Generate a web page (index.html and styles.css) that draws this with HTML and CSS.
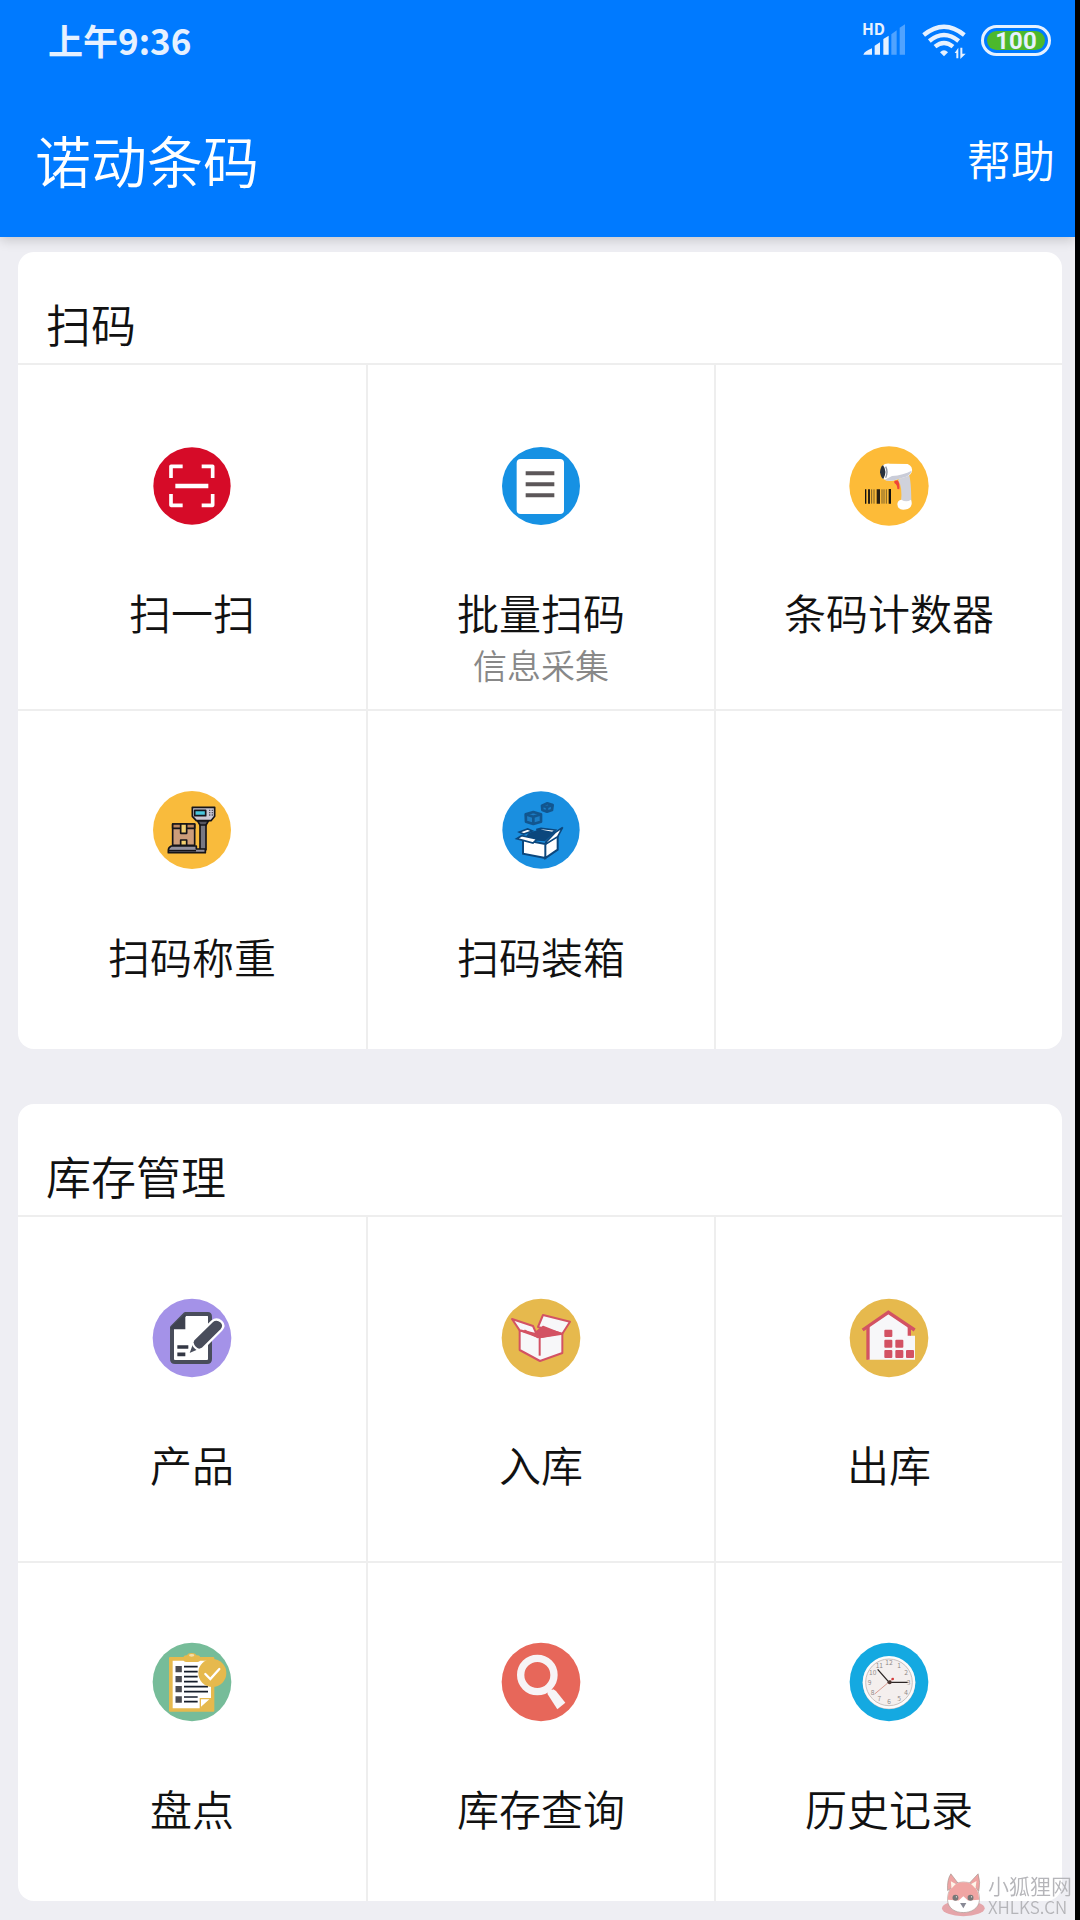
FILE: index.html
```html
<!DOCTYPE html>
<html lang="zh-CN">
  <head>
    <meta charset="UTF-8" />
    <meta name="viewport" content="width=device-width, initial-scale=1.0" />
    <link rel="stylesheet" href="styles.css" />
    <title>诺动条码</title>
  </head>
  <body>
    <header>
      <div class="status">
        <span class="time">上午9:36</span>
        <svg class="signal" viewBox="0 0 132 102" aria-hidden="true">
          <text x="0" y="36" font-size="47">HD</text>
          <path d="M4 95 Q8 84 30 76 V95 Z M38 68 L54 58 V95 H38 Z M64 48 L80 38 V95 H64 Z" />
          <path opacity="0.35" d="M88 34 L104 22 V95 H88 Z M113 14 L129 4 V95 H113 Z" />
        </svg>
        <svg class="wifi" viewBox="0 0 132 102" aria-hidden="true">
          <g fill="none" stroke="#e6f1ff" stroke-width="13">
            <path d="M5 36 Q66 -14 127 36" />
            <path d="M22 54 Q66 18 110 54" />
            <path d="M39 71 Q66 49 93 71" />
          </g>
          <path d="M54 88 Q66 76 78 88 L66 100 Z" />
          <path d="M98 90 L109 74 V106 H103 V90 Z M115 74 H121 V92 H131 L115 108 Z" />
        </svg>
        <span class="battery"><span>100</span></span>
      </div>
      <div class="bar">
        <h1>诺动条码</h1>
        <a href="#help">帮助</a>
      </div>
    </header>

    <main>
      <section>
        <h2>扫码</h2>
        <nav class="grid">
          <a href="#scan">
            <svg viewBox="35 31 240 240" aria-hidden="true">
              <circle cx="155" cy="151" r="116" fill="#d60b28" />
              <path d="M92 127 V92 H127 M184 92 H217 V127 M92 175 V209 H127 M184 209 H217 V175" fill="none" stroke="#fff" stroke-width="11" stroke-linejoin="round" />
              <path d="M105 151 H204" stroke="#fff" stroke-width="13" />
            </svg>
            <span>扫一扫</span>
          </a>
          <a href="#batch">
            <svg viewBox="32 30 240 240" aria-hidden="true">
              <circle cx="152" cy="150" r="117" fill="#1691e3" />
              <rect x="79" y="69" width="142" height="165" rx="12" fill="#fff" />
              <path d="M106 112 H192 M106 145 H192 M106 178 H192" stroke="#5c5759" stroke-width="12" />
            </svg>
            <span>批量扫码</span>
            <small>信息采集</small>
          </a>
          <a href="#counter">
            <svg viewBox="27 29 240 240" aria-hidden="true">
              <circle cx="147" cy="149" r="119" fill="#fdbb38" />
              <path d="M77 159 V202 M151 158 V202 M148 158 V202" stroke="#111" stroke-width="4" />
              <path d="M87 159 V202 M113 159 V202 M117 159 V202" stroke="#2a2112" stroke-width="6" />
              <path d="M95 159 V202 M102 159 V202 M126 159 V202 M132 159 V202 M139 159 V202" stroke="#7b6127" stroke-width="3" />
              <path d="M174 130 L206 112 Q214 130 214 205 L183 196 Q188 152 174 130 Z" fill="#d0d2db" />
              <path d="M172 204 Q172 192 184 190 Q199 199 213 190 Q220 211 203 218 Q174 226 172 204 Z" fill="#fff" />
              <path d="M163 134 L173 132 Q180 142 178 159 L172 158 Q172 145 163 140 Z" fill="#ef4438" />
              <path d="M127 88 Q136 80 150 82 L203 83 Q220 90 215 108 Q209 121 188 124 L158 133 Q139 136 127 126 Z" fill="#fff" />
              <path d="M156 119 Q190 116 215 103 Q211 120 188 124 L158 133 Q143 135 134 130 Z" fill="#c9ccd8" />
              <path d="M129 86 Q143 106 130 128 Q123 125 120 108 Q121 92 129 86 Z" fill="#28303c" />
              <path d="M137 91 Q145 106 137 124" fill="none" stroke="#8b91a0" stroke-width="4" />
            </svg>
            <span>条码计数器</span>
          </a>
          <a href="#weigh">
            <svg viewBox="36 31 240 240" aria-hidden="true">
              <circle cx="156" cy="151" r="117" fill="#f9bb3c" />
              <g stroke="#151419" stroke-width="5" stroke-linejoin="round">
                <rect x="180" y="132" width="18" height="78" fill="#777782" />
                <path d="M172 123 H206 L198 136 H180 Z" fill="#555560" />
                <path d="M157 83 H224 V110 L213 123 H169 L157 110 Z" fill="#c9c6d2" />
                <rect x="164" y="92" width="33" height="16" fill="#49c6dc" />
                <rect x="98" y="133" width="66" height="64" fill="#cd9d7a" />
                <path d="M98 133 H164 V146 H98 Z" fill="#bb855f" />
                <path d="M122 133 H140 V161 H122 Z" fill="#f1cf6f" />
                <path d="M122 181 H140 V197 H122 Z" fill="#f1cf6f" />
                <path d="M94 199 H169 V208 H196 V219 H85 V212 Q85 203 94 199 Z" fill="#93919e" />
                <path d="M85 213 H168" />
              </g>
              <path d="M209 90 V109 M217 90 V109" stroke="#555560" stroke-width="4" stroke-dasharray="4 3" />
            </svg>
            <span>扫码称重</span>
          </a>
          <a href="#pack">
            <svg viewBox="31 31 240 240" aria-hidden="true">
              <circle cx="151" cy="151" r="116" fill="#1a8fe0" />
              <g fill="#1c7ec6" stroke="#12568f" stroke-width="8" stroke-linejoin="round">
                <path d="M105 104 L128 97 L151 104 V126 L128 133 L106 126 Z" />
                <path d="M105 104 L128 111 L151 104 M128 111 V133" />
                <path d="M154 78 L170 71 L186 76 L184 91 L169 96 L155 91 Z" />
                <path d="M154 78 L169 82 L186 76 M169 82 V96" />
              </g>
              <path d="M114 160 L150 148 L192 158 L163 185 L98 180 Z" fill="#0b477d" />
              <path d="M97 180 L164 193 V235 L97 222 Z M164 193 L201 167 V210 L164 235 Z" fill="#fff" stroke="#0b477d" stroke-width="6" />
              <path d="M78 177 L93 168 L139 178 L127 190 Z M86 157 L111 148 L125 154 L99 163 Z M137 150 L151 146 L194 151 L185 159 Z M165 188 L193 159 L216 143 L201 171 L166 193 Z" fill="#fff" stroke="#0b477d" stroke-width="5" />
            </svg>
            <span>扫码装箱</span>
          </a>
          <div class="empty"></div>
        </nav>
      </section>

      <section>
        <h2>库存管理</h2>
        <nav class="grid">
          <a href="#product">
            <svg viewBox="36 25 240 240" aria-hidden="true">
              <circle cx="156" cy="145" r="118" fill="#a492e8" />
              <path d="M136 73 H203 Q210 73 210 82 V208 Q210 217 201 217 H105 Q96 217 96 208 V113 Z" fill="#fff" stroke="#494d5b" stroke-width="12" stroke-linejoin="round" />
              <path d="M136 73 V119 H92 V113 Z" fill="#3e424f" />
              <path d="M112 172 H145 M112 194 H136" stroke="#333744" stroke-width="11" />
              <path d="M143 196 L160 150 L216 95 Q230 84 244 96 Q256 108 244 121 L188 177 Z" fill="#494d5b" stroke="#fff" stroke-width="7" />
              <path d="M158 160 Q161 175 178 181" fill="none" stroke="#fff" stroke-width="6" />
            </svg>
            <span>产品</span>
          </a>
          <a href="#stock-in">
            <svg viewBox="1083 25 240 240" aria-hidden="true">
              <circle cx="1203" cy="145" r="118" fill="#e6b94d" />
              <g fill="#f7f7f9" stroke="#d35263" stroke-width="6" stroke-linejoin="round">
                <path d="M1139 122 L1199 143 L1267 132 V190 L1200 214 L1139 181 Z" />
                <path d="M1199 143 V198" />
                <path d="M1209 76 L1290 96 L1267 132 L1194 112 Z" />
                <path d="M1186 129 L1209 111 L1260 131 L1199 143 Z" fill="#d35263" />
                <path d="M1116 88 L1179 109 L1190 134 L1139 122 Z" />
                <path d="M1153 122 L1196 144" />
              </g>
            </svg>
            <span>入库</span>
          </a>
          <a href="#stock-out">
            <svg viewBox="27 25 240 240" aria-hidden="true">
              <circle cx="147" cy="145" r="118" fill="#e6b94d" />
              <path d="M84 112 L145 69 L211 110 V138 H225 V210 H84 Z" fill="#f7f7f9" />
              <path d="M68 121 L145 68 L224 121" fill="none" stroke="#d35263" stroke-width="10" />
              <path d="M84 112 V210 M208 111 V138" stroke="#d35263" stroke-width="10" />
              <g fill="#d35263">
                <rect x="133" y="120" width="24" height="22" rx="3" />
                <rect x="133" y="150" width="24" height="24" rx="3" />
                <rect x="166" y="150" width="24" height="24" rx="3" />
                <rect x="133" y="181" width="24" height="24" rx="3" />
                <rect x="166" y="181" width="24" height="24" rx="3" />
                <rect x="198" y="181" width="24" height="24" rx="3" />
              </g>
            </svg>
            <span>出库</span>
          </a>
          <a href="#check">
            <svg viewBox="37 26 240 240" aria-hidden="true">
              <circle cx="157" cy="146" r="118" fill="#76bc99" />
              <rect x="88" y="71" width="136" height="164" rx="3" fill="#e6b94d" />
              <path d="M99 82 H214 V194 L182 225 H99 Z" fill="#fff" />
              <path d="M182 225 V196 H214 Z" fill="#fff" stroke="#e6b94d" stroke-width="4" />
              <rect x="131" y="66" width="51" height="20" rx="9" fill="#e6b94d" />
              <ellipse cx="156" cy="68" rx="14" ry="9" fill="#e6b94d" />
              <ellipse cx="156" cy="66" rx="8" ry="4" fill="#f3deaa" />
              <path d="M117 98 V117 M117 128 V147 M117 158 V177 M117 189 V208" stroke="#494a50" stroke-width="19" />
              <path d="M133 100 H174 M133 115 H174 M133 130 H174 M133 145 H174 M133 160 H205 M133 175 H205 M133 191 H174 M133 205 H174" stroke="#171e2b" stroke-width="5" />
              <circle cx="218" cy="119" r="42" fill="#e6b94d" />
              <path d="M197 122 L212 137 L239 107" fill="none" stroke="#fff" stroke-width="7" stroke-linecap="round" />
            </svg>
            <span>盘点</span>
          </a>
          <a href="#query">
            <svg viewBox="1083 26 240 240" aria-hidden="true">
              <circle cx="1203" cy="146" r="118" fill="#e7675a" />
              <circle cx="1192" cy="125" r="50" fill="none" stroke="#f7f4f6" stroke-width="22" />
              <path d="M1224 168 L1235 180" stroke="#f7f4f6" stroke-width="14" />
              <path d="M1222 181 L1227 174 L1240 168 L1248 173 L1276 208 L1252 228 Z" fill="#f7f4f6" />
            </svg>
            <span>库存查询</span>
          </a>
          <a href="#history">
            <svg viewBox="27 26 240 240" aria-hidden="true">
              <circle cx="147" cy="146" r="118" fill="#14a9e1" />
              <circle cx="147" cy="149" r="79" fill="#b7b9bd" />
              <circle cx="147" cy="147" r="79" fill="#fbfbfb" />
              <circle cx="147" cy="147" r="70" fill="#f4efee" stroke="#c9c1bf" stroke-width="3" />
              <g class="dial" text-anchor="middle">
                <text x="147" y="95">12</text>
                <text x="177" y="103">1</text>
                <text x="198" y="125">2</text>
                <text x="206" y="154">3</text>
                <text x="198" y="184">4</text>
                <text x="177" y="204">5</text>
                <text x="147" y="212">6</text>
                <text x="118" y="204">7</text>
                <text x="98" y="184">8</text>
                <text x="89" y="154">9</text>
                <text x="98" y="125">10</text>
                <text x="118" y="103">11</text>
              </g>
              <path d="M160 135 L104 182" stroke="#d89a91" stroke-width="3" />
              <path d="M113 108 L150 150 M143 147 L203 147" stroke="#2c2625" stroke-width="4" />
              <circle cx="149" cy="147" r="6" fill="#4a3532" />
              <circle cx="158" cy="137" r="4" fill="#d33b3b" />
            </svg>
            <span>历史记录</span>
          </a>
        </nav>
      </section>
    </main>

    <aside class="watermark">
      <svg viewBox="120 92 134 136" aria-hidden="true">
        <ellipse cx="188" cy="202" rx="65" ry="24" fill="#e5a5aa" />
        <g stroke="#a79590" stroke-width="2">
          <path d="M140 148 Q138 115 150 97 L173 127 Z M205 127 L233 97 Q241 122 235 150 Z" fill="#eea4a3" />
          <path d="M188 122 C225 122 238 148 237 178 C235 203 211 215 188 215 C164 215 142 203 140 178 C139 148 155 122 188 122 Z" fill="#fff" />
        </g>
        <path d="M188 123 C220 123 236 146 236 176 L202 178 L188 165 L174 178 L141 176 C140 147 156 123 188 123 Z" fill="#f0a5a3" />
        <path d="M150 120 L152 142 L165 128 Z M228 119 L225 142 L212 128 Z" fill="#fff5e9" />
        <circle cx="164" cy="170" r="9" fill="#777" />
        <circle cx="210" cy="170" r="9" fill="#777" />
        <circle cx="167" cy="167" r="2" fill="#fff" />
        <circle cx="213" cy="167" r="2" fill="#fff" />
        <path d="M178 186 H197 L188 202 Z" fill="#888995" />
      </svg>
      <div>
        <p>小狐狸网</p>
        <p class="site">XHLKS.CN</p>
      </div>
    </aside>
  </body>
</html>
```

FILE: styles.css
```css
* {
  margin: 0;
  padding: 0;
  box-sizing: border-box;
}

body {
  min-height: 100vh;
  background-color: #eeeef3;
  border-right: 5px solid #000;
  color: #111;
  font-family: "Noto Sans CJK SC", sans-serif;
  font-weight: 350;
  overflow-x: hidden;
}

a {
  color: inherit;
  text-decoration: none;
}

header {
  background-color: #007aff;
  color: #fff;
  box-shadow: 0 2px 12px rgba(0, 0, 0, 0.2);
}

.status {
  display: flex;
  align-items: center;
  height: 80px;
  padding: 0 24px 0 48px;
  color: #e6f1ff;
}
.status svg {
  width: 44px;
  height: 34px;
  fill: #e6f1ff;
  overflow: visible;
}
.time {
  margin-right: auto;
  padding-bottom: 2px;
  font-size: 35px;
  font-weight: 700;
}
.signal {
  margin-right: 16px;
  font-weight: 700;
}
.wifi {
  margin-right: 15px;
}
.battery {
  width: 70px;
  height: 31px;
  padding: 3px;
  border: 3px solid #e6f1ff;
  border-radius: 16px;
}
.battery span {
  display: block;
  height: 19px;
  border-radius: 10px;
  background-color: #4cb82c;
  font-family: Roboto, sans-serif;
  font-size: 24px;
  font-weight: 700;
  line-height: 20px;
  text-align: center;
}

.bar {
  display: flex;
  align-items: center;
  justify-content: space-between;
  height: 157px;
  padding: 0 20px 0 35px;
}
.bar h1 {
  font-size: 56px;
  font-weight: 350;
}
.bar a {
  font-size: 44px;
}

main {
  display: flex;
  flex-direction: column;
  gap: 55px;
  padding: 15px 13px 19px 18px;
}

section {
  border-radius: 16px;
  background-color: #fff;
  overflow: hidden;
}
h2 {
  height: 113px;
  padding: 34px 28px 0;
  border-bottom: 2px solid #eee;
  font-size: 45px;
  font-weight: 350;
  line-height: 76px;
}

.grid {
  display: grid;
  grid-template-columns: repeat(3, 1fr);
}
.grid > * {
  display: flex;
  flex-direction: column;
  align-items: center;
  height: 344px;
  padding-top: 81px;
  border-left: 2px solid #eee;
}
.grid > :nth-child(3n + 1) {
  border-left: none;
}
.grid > :nth-child(n + 4) {
  height: 340px;
  padding-top: 79px;
  border-top: 2px solid #eee;
}
.grid svg {
  width: 80px;
  height: 80px;
}
.grid span {
  margin-top: 56px;
  font-size: 42px;
  line-height: 60px;
}
.grid small {
  color: #888;
  font-size: 34px;
  line-height: 46px;
}
.dial {
  fill: #8a8482;
  font-size: 20px;
}

.watermark {
  position: fixed;
  right: 8px;
  bottom: 3px;
  display: flex;
  align-items: center;
  gap: 3px;
  color: #b5b5b9;
}
.watermark svg {
  width: 44px;
  height: 45px;
}
.watermark p {
  font-size: 21px;
  line-height: 24px;
}
.watermark .site {
  font-size: 17px;
  line-height: 20px;
}
```
